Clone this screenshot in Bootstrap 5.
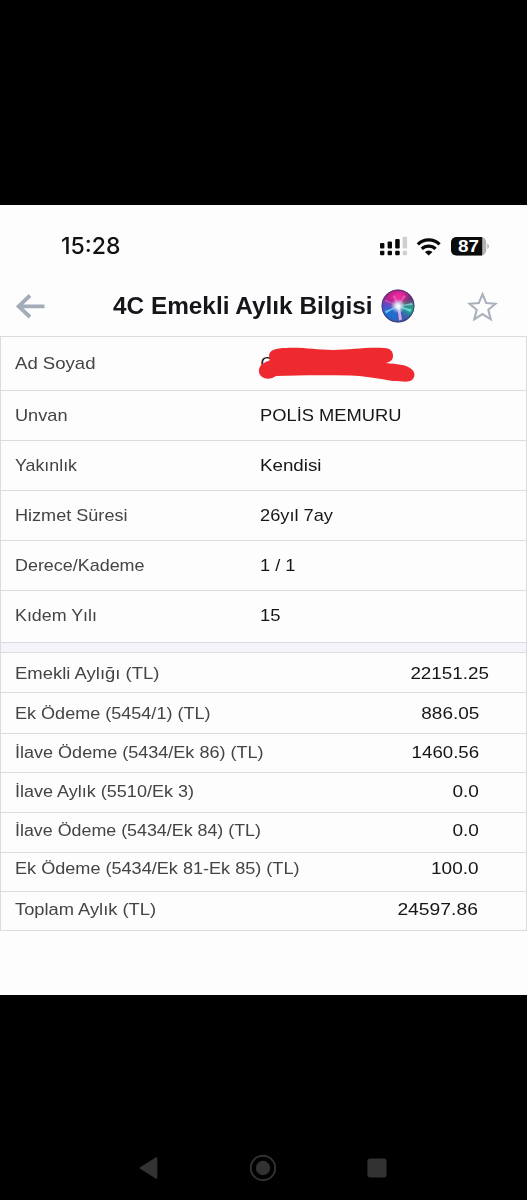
<!DOCTYPE html>
<html lang="tr">
<head>
<meta charset="utf-8">
<meta name="viewport" content="width=device-width, initial-scale=1">
<title>4C Emekli Aylık Bilgisi</title>
<link href="https://cdn.jsdelivr.net/npm/bootstrap@5.3.0/dist/css/bootstrap.min.css" rel="stylesheet">
<style>
  body { background: #000; font-family: "Liberation Sans", Arial, sans-serif; }
  .phone { width: 527px; height: 1200px; padding-top: 205px; }
  .sheet { height: 790px; background: #fdfdfd; }
  .statusbar { height: 71px; padding: 11px 38px 0 61px; }
  .clock { font: 500 23px/1 Inter, sans-serif; color: #111; }
  .titlebar { height: 60px; padding: 0 29px 0 16px; }
  .titlebar h1 { width: 259.5px; margin-left: 68px; font-size: 23px; line-height: 28px; color: #15161a; }
  .siri { margin-left: 8.5px; }
  .grid-box { border: 1px solid #dcdcde; border-top: 0; }
  .line-item { border-top: 1px solid #dcdcde; padding-left: 13.5px; }
  .line-item .key { color: #444447; white-space: nowrap; }
  .line-item .val { color: #161618; white-space: nowrap; }
  .fit { display: inline-block; transform-origin: 0 50%; white-space: nowrap; }
  .val-end .fit { transform-origin: 100% 50%; }
  .upper { font-size: 16.6px; line-height: 20px; }
  .upper .key { width: 245px; }
  .upper .line-item { height: 50px; }
  .upper .line-item:first-child { height: 54px; }
  .upper .line-item:last-child { height: 52px; padding-bottom: 2px; }
  .scribble { margin-left: -2px; }
  .divider { height: 10px; border-top: 1px solid #dcdcde; background: #f4f4fa; }
  .lower { font-size: 15.8px; line-height: 20px; }
  .lower .line-item { height: 40px; padding-top: 2px; padding-right: 47px; }
  .lower .line-item:nth-child(1) { padding-right: 37px; }
  .lower .line-item:nth-child(2) { height: 41px; }
  .lower .line-item:nth-child(3) { height: 39px; padding-bottom: 3px; }
  .lower .line-item:nth-child(4) { padding-bottom: 4px; }
  .lower .line-item:nth-child(5) { padding-bottom: 6px; }
  .lower .line-item:nth-child(6) { height: 39px; padding-bottom: 8px; }
  .lower .line-item:nth-child(7) { height: 39px; padding-bottom: 4px; padding-right: 48px; }
  .navkeys { height: 63px; margin-top: 141px; padding: 0 140px 0 139px; }
  svg { display: block; flex: none; }
</style>
</head>
<body>
<div class="phone d-flex flex-column overflow-hidden">
  <main class="sheet">
    <div class="statusbar d-flex align-items-center justify-content-between">
      <span class="clock"><span class="fit" data-w="59.5">15:28</span></span>
      <svg width="110" height="20" viewBox="379 236 110 20">
        <g fill="#090909">
          <rect x="380" y="243" width="4.4" height="5.4" rx="1"/>
          <rect x="387.6" y="241.4" width="4.4" height="7" rx="1"/>
          <rect x="395.2" y="239" width="4.5" height="9.4" rx="1"/>
          <rect x="380" y="250.8" width="4.4" height="4.5" rx="1"/>
          <rect x="387.6" y="250.8" width="4.4" height="4.5" rx="1"/>
          <rect x="395.2" y="250.8" width="4.5" height="4.5" rx="1"/>
        </g>
        <g fill="#cfcfcf">
          <rect x="402.6" y="236.8" width="4.5" height="11.6" rx="1"/>
          <rect x="402.6" y="250.8" width="4.5" height="4.5" rx="1"/>
        </g>
        <g fill="none" stroke="#090909" stroke-width="3.2">
          <path d="M417.800 244.300a15.800 15.800 0 0 1 21.800 0"/>
          <path d="M421.800 248.900a9.900 9.900 0 0 1 13.800 0"/>
        </g>
        <path d="M424.900 252a5.400 5.400 0 0 1 7.600 0l-3.800 3.600z" fill="#090909"/>
        <rect x="451" y="237" width="35.2" height="18.4" rx="5.2" fill="#b4b4b6"/>
        <path d="M456.2 237H482.2V255.4H456.2a5.2 5.2 0 0 1-5.2-5.2v-8a5.2 5.2 0 0 1 5.2-5.2z" fill="#0b0d0d"/>
        <path d="M487.3 243.6q1.600.5 1.600 2.700t-1.600 2.700z" fill="#b4b4b6"/>
        <text x="458" y="252" font-family="Liberation Sans, Arial, sans-serif" font-weight="700" font-size="16.5" textLength="21" lengthAdjust="spacingAndGlyphs" fill="#fff">87</text>
      </svg>
    </div>
    <header class="titlebar d-flex align-items-center">
      <svg width="29" height="25" viewBox="16 294 29 25" fill="none" stroke="#a4acba" stroke-width="3.800"><path d="M44.500 306.300H18.500M30 295.500L18.600 306.300L30 317"/></svg>
      <h1 class="fw-bold mb-0"><span class="fit" data-w="259.5">4C Emekli Aylık Bilgisi</span></h1>
      <svg class="siri" width="34" height="34" viewBox="0 0 34 34">
        <defs>
          <clipPath id="orb"><circle cx="17" cy="17" r="16.2"/></clipPath>
          <filter id="soft" x="-40%" y="-40%" width="180%" height="180%"><feGaussianBlur stdDeviation="2.6"/></filter>
          <radialGradient id="glow"><stop offset="0" stop-color="#fff"/><stop offset=".35" stop-color="#e9faff" stop-opacity=".8"/><stop offset="1" stop-color="#bfe6ff" stop-opacity="0"/></radialGradient>
        </defs>
        <g clip-path="url(#orb)">
          <rect width="34" height="34" fill="#394a9c"/>
          <g filter="url(#soft)">
            <path d="M17 17L-2 14L2-4H34L28 8z" fill="#b51d86"/>
            <path d="M17 15L8 7L18 2L28 8z" fill="#f02aa0"/>
            <path d="M17 17L28 5L38 8V17z" fill="#643078"/>
            <path d="M17 17L36 14V25L26 28z" fill="#12a88e"/>
            <path d="M17 17L28 25L24 36H14z" fill="#3a5eb0"/>
            <path d="M17 17L14 36L-2 30V20z" fill="#1b6ed0"/>
            <path d="M17 17L-2 21V10z" fill="#5348c8"/>
          </g>
          <path d="M17 17L4 22L5 24.500zM17 17L31 14L31.500 16zM17 17L31 20.500L29 23z" fill="#8ff0f2" opacity=".65"/>
          <path d="M16 16L18 31.500L21 30.500L18.500 16z" fill="#f0b8f4" opacity=".85"/>
          <path d="M17 17L12 7L14 6.500zM17 17L23 6L24.500 7.500zM17 17L4 12L5 11z" fill="#ffb6ec" opacity=".4"/>
          <circle cx="17" cy="17" r="7.500" fill="url(#glow)"/>
        </g>
        <circle cx="17" cy="17" r="15.900" fill="none" stroke="#48356f" stroke-width="1.200" opacity=".75"/>
      </svg>
      <svg class="ms-auto" width="31" height="31" viewBox="467 292 31 31" fill="none" stroke="#a9afbb" stroke-width="2.100"><path d="M482.500 295.200L486.200 304.100L495.500 304.800L488.300 310.800L490.700 320.300L482.500 315.100L474.300 320.300L476.700 310.800L469.500 304.800L478.800 304.100Z"/></svg>
    </header>

    <section class="grid-box">
      <div class="upper">
        <div class="line-item d-flex align-items-center">
          <div class="key"><span class="fit" data-w="80.5">Ad Soyad</span></div>
          <svg class="scribble" width="158" height="38" viewBox="258 345 158 38">
            <text x="260.500" y="368.500" font-family="Liberation Sans, Arial, sans-serif" font-size="17" fill="#161618">C</text>
            <path d="M269 356C269 350 276 348 286 348C304 347 315 350 333 350C351 350 365 347 384 348C390 348 393 351 393 356C393 360 390 362 386 363C397 364 406 365 410 368C415 371 416 376 412 380C408 383 401 381 393 381C380 379 366 376 350 375.500C326 375 299 375 276 376C272 379 265 380 261 376C257 372 259 365 264 363C267 361 269 361 270 360Z" fill="#ee2a30"/>
          </svg>
        </div>
        <div class="line-item d-flex align-items-center"><div class="key"><span class="fit" data-w="52.5">Unvan</span></div><div class="val"><span class="fit" data-w="141.5">POLİS MEMURU</span></div></div>
        <div class="line-item d-flex align-items-center"><div class="key"><span class="fit" data-w="62">Yakınlık</span></div><div class="val"><span class="fit" data-w="61.5">Kendisi</span></div></div>
        <div class="line-item d-flex align-items-center"><div class="key"><span class="fit" data-w="112.5">Hizmet Süresi</span></div><div class="val"><span class="fit" data-w="73">26yıl 7ay</span></div></div>
        <div class="line-item d-flex align-items-center"><div class="key"><span class="fit" data-w="129.5">Derece/Kademe</span></div><div class="val"><span class="fit" data-w="35.5">1 / 1</span></div></div>
        <div class="line-item d-flex align-items-center"><div class="key"><span class="fit" data-w="82">Kıdem Yılı</span></div><div class="val"><span class="fit" data-w="20.5">15</span></div></div>
      </div>
      <div class="divider"></div>
      <div class="lower">
        <div class="line-item d-flex align-items-center justify-content-between"><div class="key"><span class="fit" data-w="144.5">Emekli Aylığı (TL)</span></div><div class="val val-end"><span class="fit" data-w="78.5">22151.25</span></div></div>
        <div class="line-item d-flex align-items-center justify-content-between"><div class="key"><span class="fit" data-w="195.5">Ek Ödeme (5454/1) (TL)</span></div><div class="val val-end"><span class="fit" data-w="58">886.05</span></div></div>
        <div class="line-item d-flex align-items-center justify-content-between"><div class="key"><span class="fit" data-w="248.5">İlave Ödeme (5434/Ek 86) (TL)</span></div><div class="val val-end"><span class="fit" data-w="67.5">1460.56</span></div></div>
        <div class="line-item d-flex align-items-center justify-content-between"><div class="key"><span class="fit" data-w="179">İlave Aylık (5510/Ek 3)</span></div><div class="val val-end"><span class="fit" data-w="26.5">0.0</span></div></div>
        <div class="line-item d-flex align-items-center justify-content-between"><div class="key"><span class="fit" data-w="246">İlave Ödeme (5434/Ek 84) (TL)</span></div><div class="val val-end"><span class="fit" data-w="26.5">0.0</span></div></div>
        <div class="line-item d-flex align-items-center justify-content-between"><div class="key"><span class="fit" data-w="284.5">Ek Ödeme (5434/Ek 81-Ek 85) (TL)</span></div><div class="val val-end"><span class="fit" data-w="47.5">100.0</span></div></div>
        <div class="line-item d-flex align-items-center justify-content-between"><div class="key"><span class="fit" data-w="141">Toplam Aylık (TL)</span></div><div class="val val-end"><span class="fit" data-w="80.5">24597.86</span></div></div>
      </div>
    </section>
  </main>

  <nav class="navkeys d-flex align-items-center justify-content-between">
    <svg width="19" height="24" viewBox="0 0 19 24"><path d="M1.500 12L17.500 2V22Z" fill="#323232" stroke="#323232" stroke-width="1.600" stroke-linejoin="round"/></svg>
    <svg width="28" height="28" viewBox="0 0 28 28"><circle cx="14" cy="14" r="12.200" fill="none" stroke="#323232" stroke-width="1.900"/><circle cx="14" cy="14" r="7.200" fill="#323232"/></svg>
    <svg width="20" height="20" viewBox="0 0 20 20"><rect x=".4" y=".4" width="19.200" height="19.200" rx="3" fill="#323232"/></svg>
  </nav>
</div>
<script src="https://cdn.jsdelivr.net/npm/bootstrap@5.3.0/dist/js/bootstrap.bundle.min.js"></script>
<script>
  document.querySelectorAll('.fit').forEach(function (el) {
    var natural = el.getBoundingClientRect().width;
    el.style.transform = 'scaleX(' + (el.dataset.w / natural) + ')';
  });
</script>
</body>
</html>
